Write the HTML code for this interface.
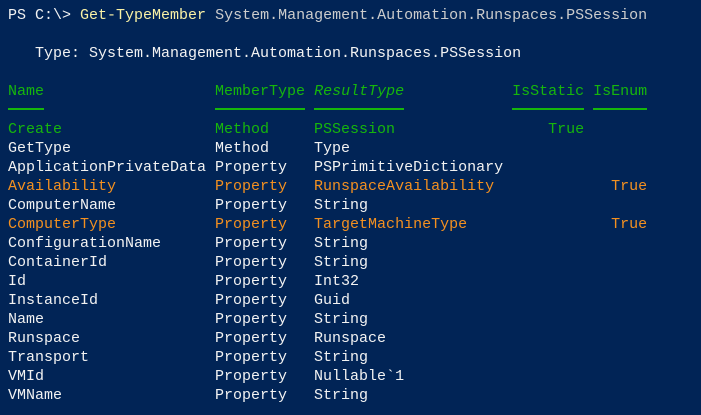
<!DOCTYPE html>
<html><head><meta charset="utf-8"><style>
html,body{margin:0;padding:0;}
body{width:701px;height:415px;background:#012456;overflow:hidden;position:relative;font-family:"Liberation Mono",monospace;font-size:15px;color:#f2f2f2;}
.l{position:absolute;left:8px;height:19px;line-height:19px;white-space:pre;}
.g{color:#16b60c}.o{color:#f39020}.y{color:#f9f1a5}.c{color:#cccccc}
.u{position:absolute;height:2px;background:#16b60c;top:108px;}
</style></head><body>
<div class="l" style="top:6px">PS C:\&gt; <span class="y">Get-TypeMember</span> <span class="c">System.Management.Automation.Runspaces.PSSession</span></div>
<div class="l" style="top:44px">   Type: System.Management.Automation.Runspaces.PSSession</div>
<div class="l g" style="top:82px">Name                   MemberType <i>ResultType</i>            IsStatic IsEnum</div>
<div class="u" style="left:8px;width:36px"></div>
<div class="u" style="left:215px;width:90px"></div>
<div class="u" style="left:314px;width:90px"></div>
<div class="u" style="left:512px;width:72px"></div>
<div class="u" style="left:593px;width:54px"></div>
<div class="l g" style="top:120px">Create                 Method     PSSession                 True</div>
<div class="l" style="top:139px">GetType                Method     Type</div>
<div class="l" style="top:158px">ApplicationPrivateData Property   PSPrimitiveDictionary</div>
<div class="l o" style="top:177px">Availability           Property   RunspaceAvailability             True</div>
<div class="l" style="top:196px">ComputerName           Property   String</div>
<div class="l o" style="top:215px">ComputerType           Property   TargetMachineType                True</div>
<div class="l" style="top:234px">ConfigurationName      Property   String</div>
<div class="l" style="top:253px">ContainerId            Property   String</div>
<div class="l" style="top:272px">Id                     Property   Int32</div>
<div class="l" style="top:291px">InstanceId             Property   Guid</div>
<div class="l" style="top:310px">Name                   Property   String</div>
<div class="l" style="top:329px">Runspace               Property   Runspace</div>
<div class="l" style="top:348px">Transport              Property   String</div>
<div class="l" style="top:367px">VMId                   Property   Nullable`1</div>
<div class="l" style="top:386px">VMName                 Property   String</div>
</body></html>
